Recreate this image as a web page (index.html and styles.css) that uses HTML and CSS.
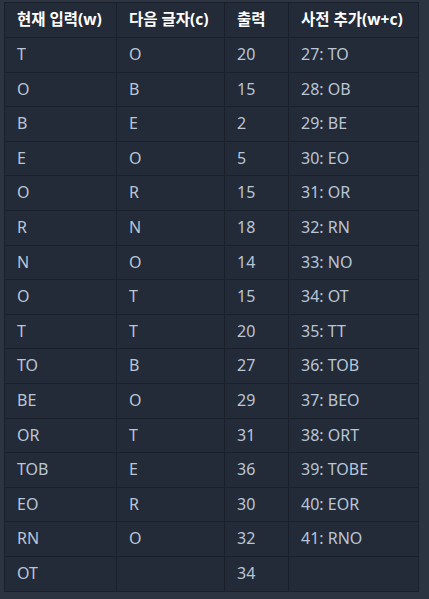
FILE: index.html
```html
<!DOCTYPE html>
<html lang="ko">
<head>
<meta charset="utf-8">
<link rel="stylesheet" href="styles.css">
</head>
<body>
<div class="wrap">
<table class="lzw">
<thead>
<tr><th class="c1">현재 입력(w)</th><th class="c2">다음 글자(c)</th><th class="c3">출력</th><th class="c4">사전 추가(w+c)</th></tr>
</thead>
<tbody>
<tr><td>T</td><td>O</td><td>20</td><td>27: TO</td></tr>
<tr><td>O</td><td>B</td><td>15</td><td>28: OB</td></tr>
<tr><td>B</td><td>E</td><td>2</td><td>29: BE</td></tr>
<tr><td>E</td><td>O</td><td>5</td><td>30: EO</td></tr>
<tr><td>O</td><td>R</td><td>15</td><td>31: OR</td></tr>
<tr><td>R</td><td>N</td><td>18</td><td>32: RN</td></tr>
<tr><td>N</td><td>O</td><td>14</td><td>33: NO</td></tr>
<tr><td>O</td><td>T</td><td>15</td><td>34: OT</td></tr>
<tr><td>T</td><td>T</td><td>20</td><td>35: TT</td></tr>
<tr><td>TO</td><td>B</td><td>27</td><td>36: TOB</td></tr>
<tr><td>BE</td><td>O</td><td>29</td><td>37: BEO</td></tr>
<tr><td>OR</td><td>T</td><td>31</td><td>38: ORT</td></tr>
<tr><td>TOB</td><td>E</td><td>36</td><td>39: TOBE</td></tr>
<tr><td>EO</td><td>R</td><td>30</td><td>40: EOR</td></tr>
<tr><td>RN</td><td>O</td><td>32</td><td>41: RNO</td></tr>
<tr><td>OT</td><td></td><td>34</td><td></td></tr>
</tbody>
</table>
</div>
</body>
</html>
```
FILE: styles.css
```css
html, body {
  margin: 0;
  padding: 0;
  background: #2b3440;
}
.wrap {
  padding: 2px 10px 0 4px;
}
.lzw {
  border-collapse: collapse;
  width: 415px;
  table-layout: fixed;
  background: #232a38;
  font-family: "Noto Sans", "Noto Sans CJK KR", sans-serif;
  font-size: 16px;
  line-height: 21.6px;
}
.lzw th, .lzw td {
  border: 1px solid #1a202b;
  padding: 6px 12px;
  text-align: left;
  white-space: nowrap;
  height: 21.6px;
}
.lzw th {
  color: #ffffff;
  font-weight: 700;
  font-size: 15.5px;
  height: 22px;
}
.lzw td {
  color: #b9c6d6;
  font-weight: 400;
}
.c1 { width: 87px; }
.c2 { width: 83px; }
.c3 { width: 39px; }
.c4 { width: auto; }
```
